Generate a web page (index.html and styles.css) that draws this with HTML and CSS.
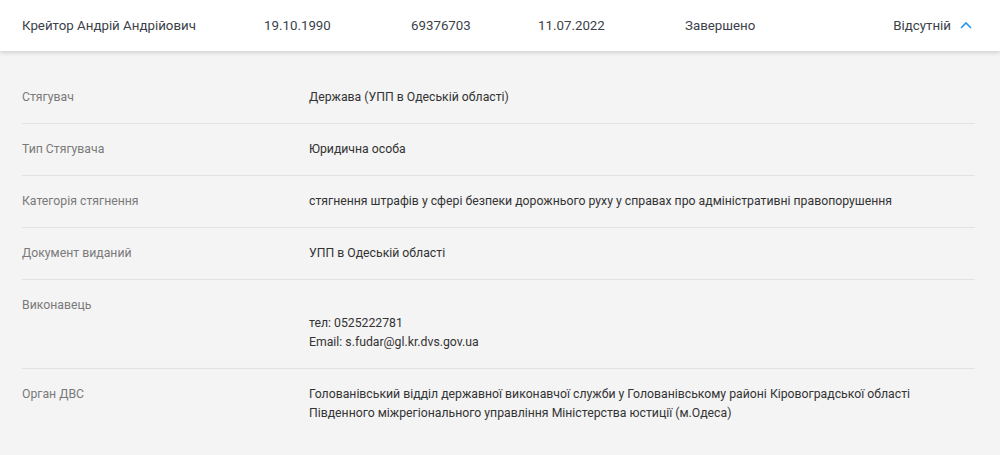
FILE: index.html
```html
<!DOCTYPE html>
<html lang="uk">
<head>
<meta charset="utf-8">
<link rel="stylesheet" href="styles.css">
</head>
<body>
<div class="card">
  <div class="head">
    <span class="c-name">Крейтор Андрій Андрійович</span>
    <span class="c-date">19.10.1990</span>
    <span class="c-id">69376703</span>
    <span class="c-date2">11.07.2022</span>
    <span class="c-status">Завершено</span>
    <span class="c-last">Відсутній
      <svg class="chev" width="12" height="8" viewBox="0 0 12 8"><path d="M1 7 L6 2 L11 7" fill="none" stroke="#2196f3" stroke-width="1.6"/></svg>
    </span>
  </div>
  <div class="details">
    <div class="row"><div class="lbl">Стягувач</div><div class="val">Держава (УПП в Одеській області)</div></div>
    <div class="row"><div class="lbl">Тип Стягувача</div><div class="val">Юридична особа</div></div>
    <div class="row"><div class="lbl">Категорія стягнення</div><div class="val">стягнення штрафів у сфері безпеки дорожнього руху у справах про адміністративні правопорушення</div></div>
    <div class="row"><div class="lbl">Документ виданий</div><div class="val">УПП в Одеській області</div></div>
    <div class="row"><div class="lbl">Виконавець</div><div class="val"><div class="line empty">&nbsp;</div><div class="line">тел: 0525222781</div><div class="line">Email: s.fudar@gl.kr.dvs.gov.ua</div></div></div>
    <div class="row last"><div class="lbl">Орган ДВС</div><div class="val"><div class="line">Голованівський відділ державної виконавчої служби у Голованівському районі Кіровоградської області</div><div class="line">Південного міжрегіонального управління Міністерства юстиції (м.Одеса)</div></div></div>
  </div>
</div>
</body>
</html>
```
FILE: styles.css
```css
html, body { margin: 0; padding: 0; }
body {
  background: #f4f4f4;
  font-family: Roboto, "Liberation Sans", sans-serif;
  width: 1000px;
  height: 455px;
  overflow: hidden;
}
.card { background: #f4f4f4; }
.head {
  background: #fff;
  height: 51px;
  display: grid;
  grid-template-columns: 242px 147px 127px 147px 1fr auto;
  align-items: center;
  padding: 0 28px 0 22px;
  font-size: 13.3px;
  color: #3b3f4a;
  box-shadow: 0 2px 4px rgba(0,0,0,0.14);
  position: relative;
  z-index: 1;
}
.c-last { display: flex; align-items: center; gap: 9px; }
.chev { display: block; margin-top: -2px; }
.details {
  padding: 21px 25px 0 22px;
}
.row {
  display: grid;
  grid-template-columns: 287px 1fr;
  padding: 16px 0;
  line-height: 19px;
  font-size: 12.25px;
  border-bottom: 1px solid #e2e2e2;
}
.row.last { border-bottom: none; }
.line.empty { height: 18px; }
.lbl { color: #7a7a7a; }
.val { color: #333; }
```
